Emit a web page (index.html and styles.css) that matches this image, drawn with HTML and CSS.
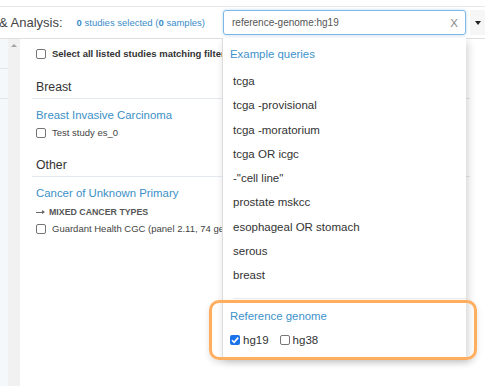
FILE: index.html
```html
<!DOCTYPE html>
<html lang="en">
<head>
    <meta charset="UTF-8">
    <title>Query</title>
    <link rel="stylesheet" href="styles.css">
</head>
<body>

<div class="topbar"></div>

<!-- header with study search -->
<div class="header">
    <span class="title">&amp; Analysis:</span>
    <span class="selected"><b>0</b> studies selected (<b>0</b> samples)</span>
    <div class="search">
        <div class="search-input">
            <span class="query">reference-genome:hg19</span>
            <span class="clear">X</span>
        </div>
        <div class="dropdown">
            <div class="dd-header">Example queries</div>
            <ul class="dd-list">
                <li>tcga</li>
                <li>tcga -provisional</li>
                <li>tcga -moratorium</li>
                <li>tcga OR icgc</li>
                <li>-"cell line"</li>
                <li>prostate mskcc</li>
                <li>esophageal OR stomach</li>
                <li>serous</li>
                <li>breast</li>
            </ul>
            <div class="dd-divider"></div>
            <div class="dd-header genome">Reference genome</div>
            <div class="genome-opts">
                <label class="opt"><span class="box checked"><svg width="10" height="10" viewBox="0 0 10 10"><path d="M2 5.2 L4.1 7.3 L8.2 2.6" fill="none" stroke="#fff" stroke-width="1.6"/></svg></span>hg19</label>
                <label class="opt"><span class="box"></span>hg38</label>
            </div>
        </div>
    </div>
    <span class="caret-btn"><span class="caret"></span></span>
</div>

<div class="page">
    <div class="sidebar">
        <div class="side-row first"></div>
        <div class="side-row"></div>
    </div>
    <div class="track"><span class="arrow-up"></span></div>

    <div class="studies">
        <div class="select-all"><span class="box"></span>Select all listed studies matching filter</div>

        <h3 class="group">Breast</h3>
        <a class="cancer">Breast Invasive Carcinoma</a>
        <div class="study"><span class="box"></span>Test study es_0</div>

        <h3 class="group">Other</h3>
        <a class="cancer">Cancer of Unknown Primary</a>
        <div class="subtype"><span class="arrow"></span>MIXED CANCER TYPES</div>
        <div class="study sub"><span class="box"></span>Guardant Health CGC (panel 2.11, 74 genes)</div>
    </div>
</div>

<!-- annotation round the genome filter -->
<div class="highlight"></div>

</body>
</html>
```

FILE: styles.css
```css
body {
    margin: 0;
    background: #fff;
    color: #333;
    font-family: "Liberation Sans", Arial, sans-serif;
    overflow: hidden;
}

.topbar {
    height: 6px;
    border-bottom: 1px solid #e8e8e8;
}

.header {
    display: flex;
    align-items: center;
    height: 31px;
    border-bottom: 1px solid #dedede;
    white-space: nowrap;
}

.title {
    margin-left: -1px;
    font-size: 13px;
    color: #444;
}

.selected {
    margin-left: 14px;
    font-size: 9.5px;
    color: #3a8cc8;
}

.search {
    position: relative;
    margin-left: auto;
    width: 243px;
}

.search-input {
    display: flex;
    align-items: center;
    height: 23px;
    border: 1px solid #7fb8e6;
    border-radius: 3px;
    padding: 0 7px 0 8px;
    box-shadow: 0 0 3px rgba(102, 175, 233, 0.5);
}

.query {
    font-size: 10px;
    color: #555;
}

.clear {
    margin-left: auto;
    font-size: 11.5px;
    color: #888;
}

.caret-btn {
    display: flex;
    justify-content: center;
    align-items: center;
    width: 15px;
    height: 25px;
    margin-left: 4px;
    background: #f6f6f6;
}

.caret {
    border-top: 4px solid #222;
    border-left: 3.5px solid transparent;
    border-right: 3.5px solid transparent;
}

/* dropdown with example queries */
.dropdown {
    position: absolute;
    top: 28px;
    left: -1px;
    width: 243px;
    background: #fff;
    border-left: 1px solid #ddd;
    box-shadow: 2px 4px 8px rgba(0, 0, 0, 0.18);
    padding-bottom: 10px;
    z-index: 2;
}

.dd-header {
    padding: 9px 7px 8px;
    font-size: 11.4px;
    line-height: 14px;
    color: #3d92ca;
}

.dd-list {
    list-style: none;
    margin: 0;
    padding: 0;
}

.dd-list li {
    padding: 5px 10px;
    font-size: 11.5px;
    line-height: 14.3px;
    color: #333;
}

.dd-divider {
    margin: 10px 0 0 10px;
    border-top: 1px solid #ececec;
}

.dd-header.genome {
    padding: 10px 7px 10px;
}

.genome-opts {
    display: flex;
    gap: 11px;
    padding-left: 7px;
    font-size: 11.5px;
    line-height: 14px;
}

.opt {
    display: flex;
    align-items: center;
}

.opt .box {
    margin-right: 3px;
}

/* checkboxes */
.box {
    display: inline-flex;
    flex: none;
    box-sizing: border-box;
    width: 10px;
    height: 10px;
    border: 1px solid #767676;
    border-radius: 2px;
    background: #fff;
}

.box.checked {
    border: none;
    background: #1a73e8;
}

/* study list */
.page {
    display: flex;
    height: 347px;
}

.sidebar {
    width: 8px;
    background: #f5f8fb;
}

.side-row {
    height: 29px;
    border-bottom: 1px solid #dfe6ee;
}

.track {
    width: 12px;
    background: #f1f1f1;
    display: flex;
    justify-content: center;
}

.arrow-up {
    margin-top: 5px;
    width: 0;
    height: 0;
    border-bottom: 3px solid #a3a3a3;
    border-left: 3px solid transparent;
    border-right: 3px solid transparent;
}

.studies {
    flex: 1;
    padding: 10px 15px 0 16px;
    white-space: nowrap;
    overflow: hidden;
}

.select-all {
    display: flex;
    align-items: center;
    gap: 6px;
    font-size: 9.5px;
    font-weight: bold;
    line-height: 10px;
    color: #333;
}

.group {
    margin: 20px 0 0 -4px;
    padding: 0 0 3px 4px;
    font-size: 12.3px;
    font-weight: normal;
    line-height: 16px;
    color: #333;
    border-bottom: 1px solid #e4eaf0;
}

.group + .cancer {
    margin-top: 9px;
}

.cancer {
    display: block;
    font-size: 11.4px;
    line-height: 14px;
    color: #3a90c6;
}

.study {
    display: flex;
    align-items: center;
    gap: 6px;
    margin-top: 5px;
    font-size: 9.5px;
    line-height: 12px;
    color: #444;
}

.study + .group {
    margin-top: 18px;
}

.subtype {
    display: flex;
    align-items: center;
    margin-top: 7px;
    font-size: 8.8px;
    font-weight: bold;
    line-height: 10px;
    color: #555;
}

.arrow {
    position: relative;
    width: 8px;
    margin-right: 5px;
    border-top: 1px solid #666;
}

.arrow::after {
    content: "";
    position: absolute;
    right: -1px;
    top: -3px;
    border-left: 3px solid #666;
    border-top: 2.5px solid transparent;
    border-bottom: 2.5px solid transparent;
}

.study.sub {
    margin-top: 6px;
}

.highlight {
    position: absolute;
    left: 209px;
    top: 300px;
    width: 262px;
    height: 54px;
    border: 3px solid #ffae5f;
    border-radius: 10px;
    box-shadow: 0 3px 6px rgba(0, 0, 0, 0.12);
    z-index: 3;
}
```
